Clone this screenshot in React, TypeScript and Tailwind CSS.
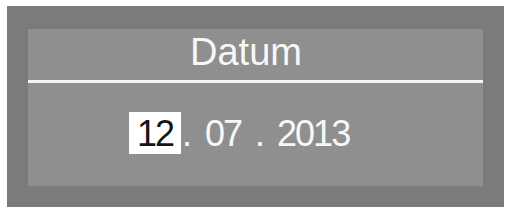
export default function App() {
  return (
    <div className="w-[507px] h-[209px] bg-white pt-[6px] pl-[7px]" style={{ fontFamily: '"Liberation Sans", Arial, sans-serif' }}>
      <div className="w-[497px] h-[201px] bg-[#7b7b7b] pt-[23px] pl-[21px]">
        <div className="w-[455px] h-[157px] bg-[#8f8f8f] flex flex-col">
          <div className="h-[51px] pt-[4px] pl-[162px] text-[38px] leading-[38px] text-[#f7f7f7]">Datum</div>
          <div className="h-[3px] bg-[#f4f4f4]" />
          <div className="flex items-start pl-[101px] pt-[29px] text-[36px] leading-[36px] text-[#f7f7f7] tracking-[-2px]">
            <span className="w-[52px] h-[42px] pt-[4px] bg-white text-[#151515] flex justify-center">12</span>
            <span className="pt-[4px] ml-[1px]">.</span>
            <span className="pt-[4px] ml-[15px]">07</span>
            <span className="pt-[4px] ml-[14px]">.</span>
            <span className="pt-[4px] ml-[14px]">2013</span>
          </div>
        </div>
      </div>
    </div>
  );
}
